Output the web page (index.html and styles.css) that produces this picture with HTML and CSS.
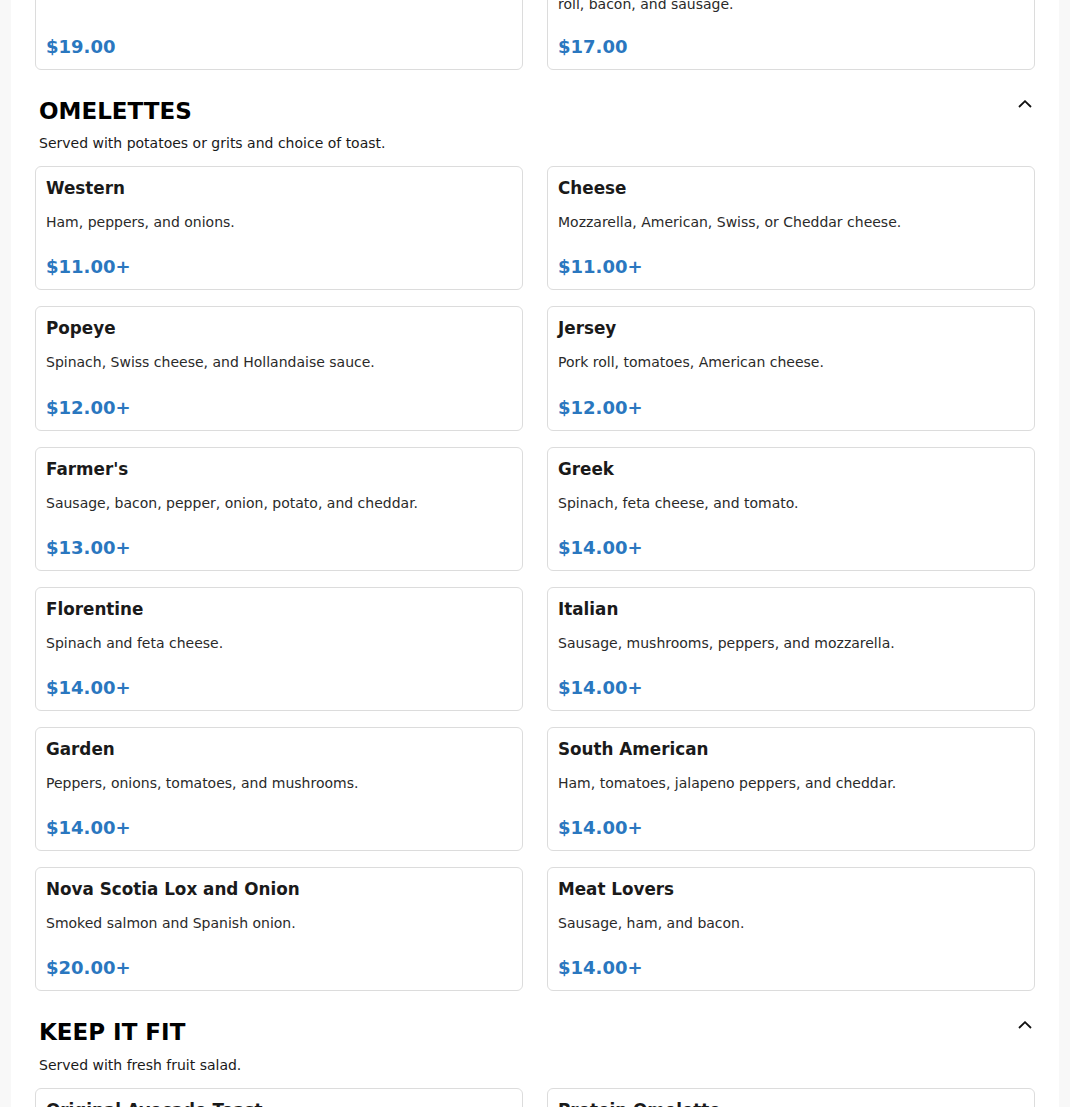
FILE: index.html
```html
<!DOCTYPE html>
<html lang="en">
<head>
<meta charset="utf-8">
<title>Menu</title>
<link rel="stylesheet" href="styles.css">
</head>
<body>
<main class="page">
  <section class="section section-prev">
    <div class="grid">
      <article class="card">
        <h3 class="card-title">Steak and Eggs</h3>
        <p class="card-desc">Grilled steak with two eggs any style.</p>
        <p class="card-price">$19.00</p>
      </article>
      <article class="card">
        <h3 class="card-title">Big Breakfast</h3>
        <p class="card-desc">Three eggs any style with pancakes, home fries, pork<br>roll, bacon, and sausage.</p>
        <p class="card-price">$17.00</p>
      </article>
    </div>
  </section>

  <section class="section">
    <header class="section-head">
      <h2 class="section-title">OMELETTES</h2>
      <button class="toggle" type="button" aria-label="Collapse">
        <svg width="14" height="8" viewBox="0 0 14 8"><polyline points="1,7 7,1.2 13,7" fill="none" stroke="#111" stroke-width="1.8"/></svg>
      </button>
    </header>
    <p class="section-note">Served with potatoes or grits and choice of toast.</p>
    <div class="grid">
      <article class="card"><h3 class="card-title">Western</h3><p class="card-desc">Ham, peppers, and onions.</p><p class="card-price">$11.00+</p></article>
      <article class="card"><h3 class="card-title">Cheese</h3><p class="card-desc">Mozzarella, American, Swiss, or Cheddar cheese.</p><p class="card-price">$11.00+</p></article>
      <article class="card"><h3 class="card-title">Popeye</h3><p class="card-desc">Spinach, Swiss cheese, and Hollandaise sauce.</p><p class="card-price">$12.00+</p></article>
      <article class="card"><h3 class="card-title">Jersey</h3><p class="card-desc">Pork roll, tomatoes, American cheese.</p><p class="card-price">$12.00+</p></article>
      <article class="card"><h3 class="card-title">Farmer's</h3><p class="card-desc">Sausage, bacon, pepper, onion, potato, and cheddar.</p><p class="card-price">$13.00+</p></article>
      <article class="card"><h3 class="card-title">Greek</h3><p class="card-desc">Spinach, feta cheese, and tomato.</p><p class="card-price">$14.00+</p></article>
      <article class="card"><h3 class="card-title">Florentine</h3><p class="card-desc">Spinach and feta cheese.</p><p class="card-price">$14.00+</p></article>
      <article class="card"><h3 class="card-title">Italian</h3><p class="card-desc">Sausage, mushrooms, peppers, and mozzarella.</p><p class="card-price">$14.00+</p></article>
      <article class="card"><h3 class="card-title">Garden</h3><p class="card-desc">Peppers, onions, tomatoes, and mushrooms.</p><p class="card-price">$14.00+</p></article>
      <article class="card"><h3 class="card-title">South American</h3><p class="card-desc">Ham, tomatoes, jalapeno peppers, and cheddar.</p><p class="card-price">$14.00+</p></article>
      <article class="card"><h3 class="card-title">Nova Scotia Lox and Onion</h3><p class="card-desc">Smoked salmon and Spanish onion.</p><p class="card-price">$20.00+</p></article>
      <article class="card"><h3 class="card-title">Meat Lovers</h3><p class="card-desc">Sausage, ham, and bacon.</p><p class="card-price">$14.00+</p></article>
    </div>
  </section>

  <section class="section">
    <header class="section-head">
      <h2 class="section-title">KEEP IT FIT</h2>
      <button class="toggle" type="button" aria-label="Collapse">
        <svg width="14" height="8" viewBox="0 0 14 8"><polyline points="1,7 7,1.2 13,7" fill="none" stroke="#111" stroke-width="1.8"/></svg>
      </button>
    </header>
    <p class="section-note">Served with fresh fruit salad.</p>
    <div class="grid">
      <article class="card"><h3 class="card-title">Original Avocado Toast</h3><p class="card-desc">Smashed avocado on multigrain toast.</p><p class="card-price">$14.00</p></article>
      <article class="card"><h3 class="card-title">Protein Omelette</h3><p class="card-desc">Egg whites, turkey, and spinach.</p><p class="card-price">$15.00</p></article>
    </div>
  </section>
</main>
</body>
</html>
```

FILE: styles.css
```css
html, body {
  margin: 0;
  padding: 0;
}

body {
  background: #f8f8f8;
  font-family: "DejaVu Sans", sans-serif;
  color: #212121;
}

.page {
  width: 1048px;
  margin: 0 auto;
  padding: 0 24px;
  box-sizing: border-box;
  background: #ffffff;
  min-height: 1107px;
  overflow: hidden;
}

.section-prev {
  margin-top: -72.5px;
}

.section-prev .card-desc {
  margin-bottom: 21px;
}

.section-head {
  display: flex;
  justify-content: space-between;
  align-items: flex-start;
  padding: 0 3px 0 4px;
  margin-top: 27.5px;
}

.section-title {
  margin: 0;
  font-size: 23px;
  line-height: 28px;
  font-weight: bold;
  color: #000;
}

.toggle {
  border: 0;
  background: none;
  padding: 0;
  margin: 3px 0 0 0;
  width: 14px;
  height: 8px;
  display: block;
  cursor: pointer;
}

.toggle svg {
  display: block;
}

.section-note {
  margin: 8.4px 0 0 0;
  padding: 0 4px;
  font-size: 14px;
  line-height: 20px;
  color: #1a1a1a;
}

.grid {
  display: grid;
  grid-template-columns: 1fr 1fr;
  column-gap: 24px;
  row-gap: 16px;
  margin-top: 13px;
}

.section-prev .grid {
  margin-top: 0;
}

.card {
  display: flex;
  flex-direction: column;
  border: 1px solid #dcdcdc;
  border-radius: 6px;
  padding: 11px 10px 10px 10px;
  background: #fff;
}

.card-title {
  margin: 0;
  font-size: 16.8px;
  line-height: 21px;
  font-weight: bold;
  color: #1a1a1a;
}

.card-desc {
  margin: 13px 0 23.1px 0;
  font-size: 14px;
  line-height: 20px;
  color: #2a2a2a;
}

.card-price {
  margin: auto 0 0 0;
  font-size: 18px;
  line-height: 24px;
  font-weight: bold;
  color: #2a77bf;
}
```
